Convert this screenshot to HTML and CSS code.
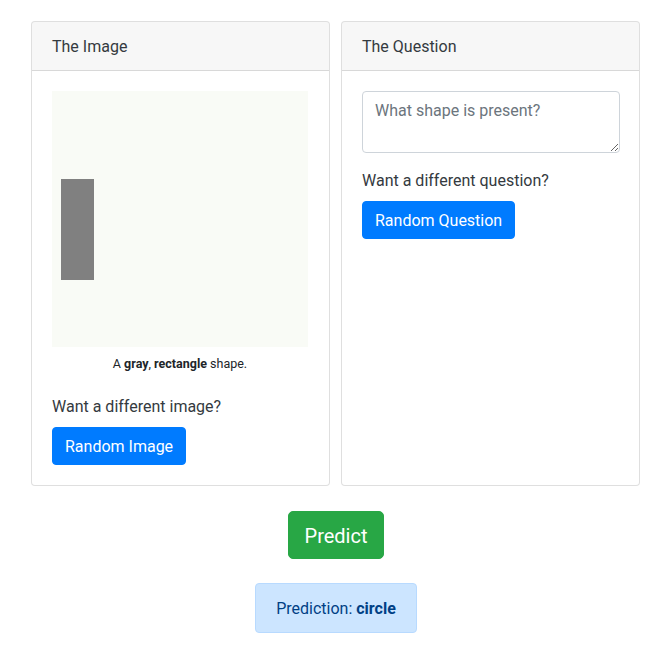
FILE: index.html
```html
<!DOCTYPE html>
<html lang="en">
<head>
<meta charset="utf-8">
<title>VQA</title>
<link rel="stylesheet" href="styles.css">
</head>
<body>
<main class="page">
  <div class="cards">
    <section class="card">
      <div class="card-header">The Image</div>
      <div class="card-body">
        <figure class="figure">
          <svg class="shape-img" width="256" height="256" viewBox="0 0 256 256">
            <rect x="0" y="0" width="256" height="256" fill="#f9fbf6"/>
            <rect x="9" y="88" width="33" height="101" fill="#808080"/>
          </svg>
          <figcaption class="caption">A <b>gray</b>, <b>rectangle</b> shape.</figcaption>
        </figure>
        <p class="prompt">Want a different image?</p>
        <button class="btn btn-primary">Random Image</button>
      </div>
    </section>
    <section class="card">
      <div class="card-header">The Question</div>
      <div class="card-body">
        <textarea class="form-control" rows="2" placeholder="What shape is present?"></textarea>
        <p class="prompt">Want a different question?</p>
        <button class="btn btn-primary">Random Question</button>
      </div>
    </section>
  </div>
  <div class="actions">
    <button class="btn btn-success btn-lg">Predict</button>
    <div class="alert">Prediction: <b>circle</b></div>
  </div>
</main>
</body>
</html>
```
FILE: styles.css
```css
* { box-sizing: border-box; }
html, body { margin: 0; padding: 0; background: #fff; }
body {
  font-family: "Segoe UI", Roboto, "Noto Sans", "Liberation Sans", sans-serif;
  font-size: 16px;
  line-height: 1.5;
  color: #212529;
}
.page {
  width: 609px;
  margin-left: 31px;
  padding-top: 21px;
}
.cards {
  display: flex;
  gap: 11px;
}
.card {
  width: 299px;
  border: 1px solid rgba(0,0,0,.125);
  border-radius: 4px;
  background: #fff;
  display: flex;
  flex-direction: column;
}
.card-header {
  padding: 13px 20px 11px;
  background: rgba(0,0,0,.03);
  border-bottom: 1px solid rgba(0,0,0,.125);
  border-radius: 3px 3px 0 0;
  color: #343a40;
}
.card-body {
  padding: 20px;
  flex: 1;
}
.figure {
  margin: 0 0 22px 0;
  display: flex;
  flex-direction: column;
}
.shape-img { display: block; }
.caption {
  margin-top: 7px;
  width: 256px;
  text-align: center;
  font-size: 12.5px;
  line-height: 19px;
  color: #212529;
}
.prompt {
  margin: -1px 0 8px 0;
  padding-top: 1px;
  color: #343a40;
}
.btn {
  font-family: inherit;
  font-size: 16px;
  line-height: 24px;
  padding: 7px 12px 5px;
  border: 1px solid transparent;
  border-radius: 4px;
  color: #fff;
  cursor: pointer;
}
.btn-primary { background: #007bff; border-color: #007bff; }
.btn-success { background: #28a745; border-color: #28a745; }
.btn-lg {
  font-size: 20px;
  line-height: 30px;
  padding: 9px 16px 7px;
  border-radius: 5px;
}
.form-control {
  display: block;
  width: 258px;
  height: 62px;
  padding: 7px 12px 5px;
  font-family: inherit;
  font-size: 16px;
  line-height: 24px;
  color: #495057;
  border: 1px solid #ced4da;
  border-radius: 4px;
  margin: 0 0 16px 0;
  resize: vertical;
}
.form-control::placeholder { color: #6c757d; opacity: 1; }
.actions {
  display: flex;
  flex-direction: column;
  align-items: center;
  padding-left: 1px;
  margin-top: 25px;
  gap: 24px;
}
.alert {
  padding: 13px 20px 11px;
  background: #cce5ff;
  border: 1px solid #b8daff;
  border-radius: 4px;
  color: #004085;
}
.alert b { font-weight: 700; }
```
